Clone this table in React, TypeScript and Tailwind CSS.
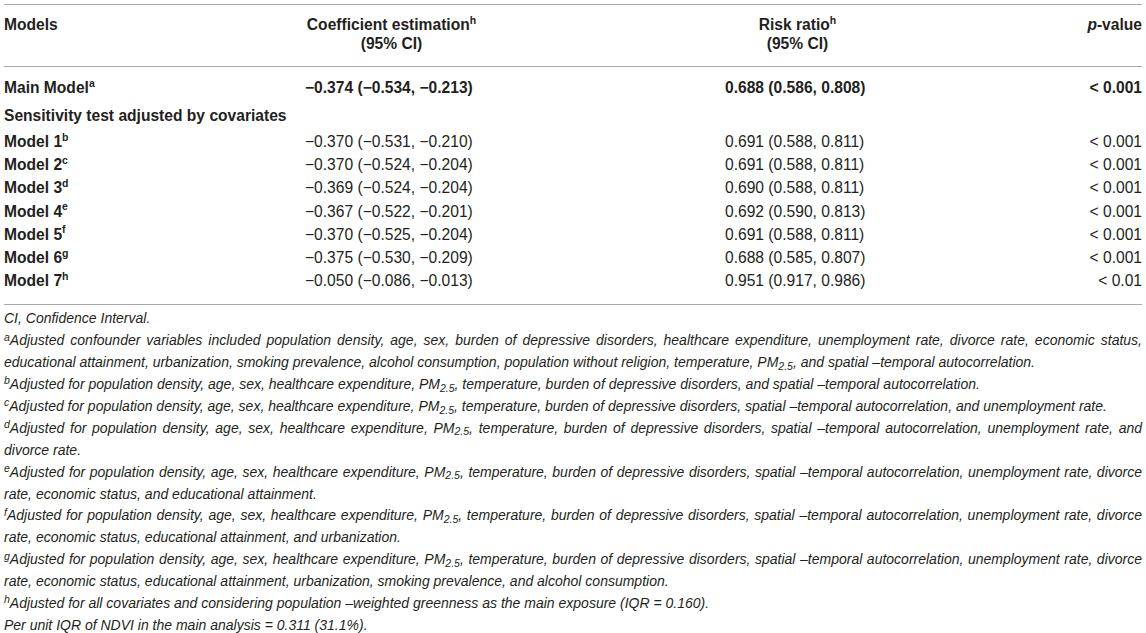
import React from "react";

type Row = { name: string; sup: string; coef: string; rr: string; p: string };

const rows: Row[] = [
  { name: "Model 1", sup: "b", coef: "−0.370 (−0.531, −0.210)", rr: "0.691 (0.588, 0.811)", p: "< 0.001" },
  { name: "Model 2", sup: "c", coef: "−0.370 (−0.524, −0.204)", rr: "0.691 (0.588, 0.811)", p: "< 0.001" },
  { name: "Model 3", sup: "d", coef: "−0.369 (−0.524, −0.204)", rr: "0.690 (0.588, 0.811)", p: "< 0.001" },
  { name: "Model 4", sup: "e", coef: "−0.367 (−0.522, −0.201)", rr: "0.692 (0.590, 0.813)", p: "< 0.001" },
  { name: "Model 5", sup: "f", coef: "−0.370 (−0.525, −0.204)", rr: "0.691 (0.588, 0.811)", p: "< 0.001" },
  { name: "Model 6", sup: "g", coef: "−0.375 (−0.530, −0.209)", rr: "0.688 (0.585, 0.807)", p: "< 0.001" },
  { name: "Model 7", sup: "h", coef: "−0.050 (−0.086, −0.013)", rr: "0.951 (0.917, 0.986)", p: "< 0.01" },
];

const Sup = ({ children }: { children: React.ReactNode }) => (
  <sup className="text-[10.5px] leading-none top-[-0.6em]">{children}</sup>
);

const PM = () => (
  <>
    PM<sub className="text-[10.5px] leading-none bottom-[-0.25em]">2.5</sub>
  </>
);

const base = "Adjusted for population density, age, sex, healthcare expenditure, ";

function Note({ mark, children }: { mark?: string; children: React.ReactNode }) {
  return (
    <div className="text-justify">
      {mark && <sup className="text-[10.5px] leading-none top-[-0.45em]">{mark}</sup>}
      {children}
    </div>
  );
}

export default function App() {
  return (
    <div className="w-[1146px] h-[633px] bg-white px-1 pt-1 text-[#231f20] font-['Liberation_Sans',Arial,sans-serif] overflow-hidden">
      {/* header */}
      <div className="h-px bg-[#a8a8a8]" />
      <div className="border-b border-[#a8a8a8] grid grid-cols-[301px_420px_1fr_auto] text-[15.6px] font-bold leading-[19px] pt-[10px] pb-[13px]">
        <div>Models</div>
        <div className="w-[173px] text-center">
          Coefficient estimation<Sup>h</Sup>
          <br />
          (95% CI)
        </div>
        <div className="w-[145px] text-center">
          Risk ratio<Sup>h</Sup>
          <br />
          (95% CI)
        </div>
        <div className="text-right">
          <i>p</i>-value
        </div>
      </div>

      {/* body */}
      <div className="border-b border-[#a8a8a8] pt-[7px] pb-[12px] text-[15.6px]">
        <div className="grid grid-cols-[301px_420px_1fr_auto] h-[27px] items-center font-bold">
          <div>
            Main Model<Sup>a</Sup>
          </div>
          <div>−0.374 (−0.534, −0.213)</div>
          <div>0.688 (0.586, 0.808)</div>
          <div className="text-right">&lt; 0.001</div>
        </div>
        <div className="h-[29px] flex items-center font-bold">Sensitivity test adjusted by covariates</div>
        {rows.map((r) => (
          <div key={r.name} className="grid grid-cols-[301px_420px_1fr_auto] h-[23.2px] items-center">
            <div className="font-bold">
              {r.name}
              <Sup>{r.sup}</Sup>
            </div>
            <div>{r.coef}</div>
            <div>{r.rr}</div>
            <div className="text-right">{r.p}</div>
          </div>
        ))}
      </div>

      {/* footnotes */}
      <div className="pt-[3px] text-[14px] italic leading-[21.9px]">
        <Note>CI, Confidence Interval.</Note>
        <Note mark="a">
          Adjusted confounder variables included population density, age, sex, burden of depressive disorders, healthcare
          expenditure, unemployment rate, divorce rate, economic status, educational attainment, urbanization, smoking
          prevalence, alcohol consumption, population without religion, temperature, <PM />, and spatial –temporal
          autocorrelation.
        </Note>
        <Note mark="b">
          {base}
          <PM />, temperature, burden of depressive disorders, and spatial –temporal autocorrelation.
        </Note>
        <Note mark="c">
          {base}
          <PM />, temperature, burden of depressive disorders, spatial –temporal autocorrelation, and unemployment rate.
        </Note>
        <Note mark="d">
          {base}
          <PM />, temperature, burden of depressive disorders, spatial –temporal autocorrelation, unemployment rate, and
          divorce rate.
        </Note>
        <Note mark="e">
          {base}
          <PM />, temperature, burden of depressive disorders, spatial –temporal autocorrelation, unemployment rate, divorce
          rate, economic status, and educational attainment.
        </Note>
        <Note mark="f">
          {base}
          <PM />, temperature, burden of depressive disorders, spatial –temporal autocorrelation, unemployment rate, divorce
          rate, economic status, educational attainment, and urbanization.
        </Note>
        <Note mark="g">
          {base}
          <PM />, temperature, burden of depressive disorders, spatial –temporal autocorrelation, unemployment rate, divorce
          rate, economic status, educational attainment, urbanization, smoking prevalence, and alcohol consumption.
        </Note>
        <Note mark="h">
          Adjusted for all covariates and considering population –weighted greenness as the main exposure (IQR = 0.160).
        </Note>
        <Note>Per unit IQR of NDVI in the main analysis = 0.311 (31.1%).</Note>
      </div>
    </div>
  );
}
